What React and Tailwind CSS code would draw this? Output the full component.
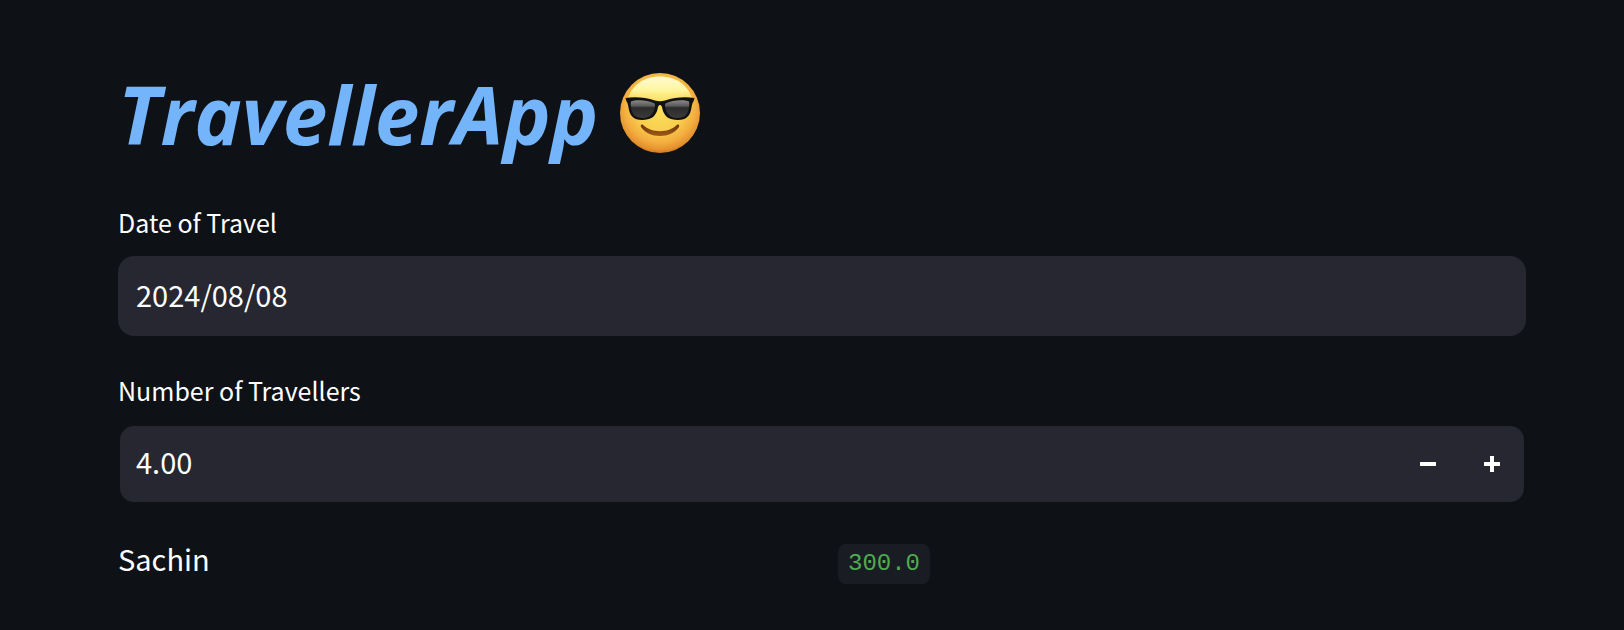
import { useState } from "react";

function SunglassesFace() {
  return (
    <svg viewBox="0 0 84 84" className="size-[84px] shrink-0" role="img" aria-label="Smiling face with sunglasses">
      <defs>
        <radialGradient id="skin" cx="50%" cy="42%" r="60%">
          <stop offset="0" stopColor="#fbe25c" />
          <stop offset="0.5" stopColor="#f9cf4f" />
          <stop offset="0.75" stopColor="#f3ae3f" />
          <stop offset="0.9" stopColor="#e5922f" />
          <stop offset="1" stopColor="#c56c1c" />
        </radialGradient>
        <linearGradient id="shine" x1="0" y1="0" x2="0" y2="1">
          <stop offset="0" stopColor="#fffbd2" />
          <stop offset="0.45" stopColor="#fef6a0" />
          <stop offset="1" stopColor="#fce866" stopOpacity="0" />
        </linearGradient>
        <linearGradient id="lens" x1="0" y1="0" x2="0" y2="1">
          <stop offset="0" stopColor="#8b8b8b" />
          <stop offset="0.32" stopColor="#5a5a5a" />
          <stop offset="0.42" stopColor="#2c2c2c" />
          <stop offset="1" stopColor="#3a3a3a" />
        </linearGradient>
        <linearGradient id="mouth" x1="0" y1="0" x2="0" y2="1">
          <stop offset="0" stopColor="#6b3409" />
          <stop offset="1" stopColor="#a05a16" />
        </linearGradient>
      </defs>
      <circle cx="42" cy="41" r="40" fill="url(#skin)" />
      <path d="M42 4.500C25 4.500 13 14 9 29C20 37 64 37 75 29C71 14 59 4.500 42 4.500Z" fill="url(#shine)" />
      <path d="M7.500 26C16 24.500 27 25 37 28.500C40 29.500 44 29.500 47 28.500C57 25 68 24.500 76.500 26L75.500 29.500C74.500 30.500 74 32.500 73.500 35.500C72.500 43.500 68.500 48 60 48C51 48 46.500 44.500 44.500 37.500C44 34.500 43.500 33 42 33C40.500 33 40 34.500 39.500 37.500C37.500 44.500 33 48 24 48C15.500 48 11.500 43.500 10.500 35.500C10 32.500 9.500 30.500 8.500 29.500Z" fill="#111" />
      <path d="M13 29.500C18 27.300 29 27.800 36.500 31.500C37.500 32.500 37 34.500 36.500 36.500C34.500 43.500 31 46 24.500 46C17.500 46 14 42.500 13 35.500C12.700 33 12.500 31 13 29.500Z" fill="url(#lens)" />
      <path d="M71 29.500C66 27.300 55 27.800 47.500 31.500C46.500 32.500 47 34.500 47.500 36.500C49.500 43.500 53 46 59.500 46C66.500 46 70 42.500 71 35.500C71.300 33 71.500 31 71 29.500Z" fill="url(#lens)" />
      <path d="M24.500 52.500C22.800 52.200 22.300 53.700 23.200 55.300C27 61 34 64 42 64C50 64 57 61 60.800 55.300C61.700 53.700 61.200 52.200 59.500 52.500C54 57.500 48.500 59.200 42 59.200C35.500 59.200 30 57.500 24.500 52.500Z" fill="url(#mouth)" />
    </svg>
  );
}

function DateField() {
  const [date, setDate] = useState("2024/08/08");
  return (
    <div className="flex flex-col gap-3">
      <label htmlFor="travel-date" className="text-[25px] leading-11">
        Date of Travel
      </label>
      <input
        id="travel-date"
        type="text"
        value={date}
        onChange={(e) => setDate(e.target.value)}
        className="h-20 w-full rounded-2xl bg-[#262730] px-[18px] pb-1 text-[29px] outline-none"
      />
    </div>
  );
}

function NumberField() {
  const [value, setValue] = useState(4);
  return (
    <div className="flex flex-col gap-3">
      <label htmlFor="travellers" className="text-[25px] leading-11">
        Number of Travellers
      </label>
      <div className="flex h-20 overflow-hidden rounded-2xl border-2 border-[#0e1116] bg-[#262730]">
        <input
          id="travellers"
          type="text"
          inputMode="decimal"
          value={value.toFixed(2)}
          onChange={(e) => setValue(Number(e.target.value) || 0)}
          className="min-w-0 flex-1 bg-transparent px-4 pb-1 text-[29px] outline-none"
        />
        <button type="button" aria-label="Decrease" onClick={() => setValue(value - 1)} className="flex w-16 items-center justify-center">
          <svg viewBox="0 0 16 16" className="size-4" fill="currentColor">
            <path d="M0 6h16v4H0z" />
          </svg>
        </button>
        <button type="button" aria-label="Increase" onClick={() => setValue(value + 1)} className="flex w-16 items-center justify-center">
          <svg viewBox="0 0 16 16" className="size-4" fill="currentColor">
            <path d="M6 0h4v6h6v4h-6v6H6v-6H0V6h6z" />
          </svg>
        </button>
      </div>
    </div>
  );
}

export default function App() {
  return (
    <main className="min-h-screen bg-[#0e1116] pt-16 pr-[98px] pb-8 pl-[118px] font-['Noto_Sans_CJK_SC',sans-serif] text-white">
      <h1 className="flex items-center gap-5 pb-9 leading-[100px]">
        <em className="font-['Open_Sans',sans-serif] text-[80px] font-bold text-[#74b4fb]">TravellerApp</em>
        <SunglassesFace />
      </h1>
      <div className="flex flex-col gap-8">
        <DateField />
        <NumberField />
        <div className="grid grid-cols-2 items-start gap-8">
          <p className="text-[29px] leading-11">Sachin</p>
          <p className="flex h-14 items-center">
            <code className="rounded-lg bg-[#1a1c24] px-[10px] font-['Liberation_Mono',monospace] text-2xl leading-10 text-[#4fab4f]">
              300.0
            </code>
          </p>
        </div>
      </div>
    </main>
  );
}
